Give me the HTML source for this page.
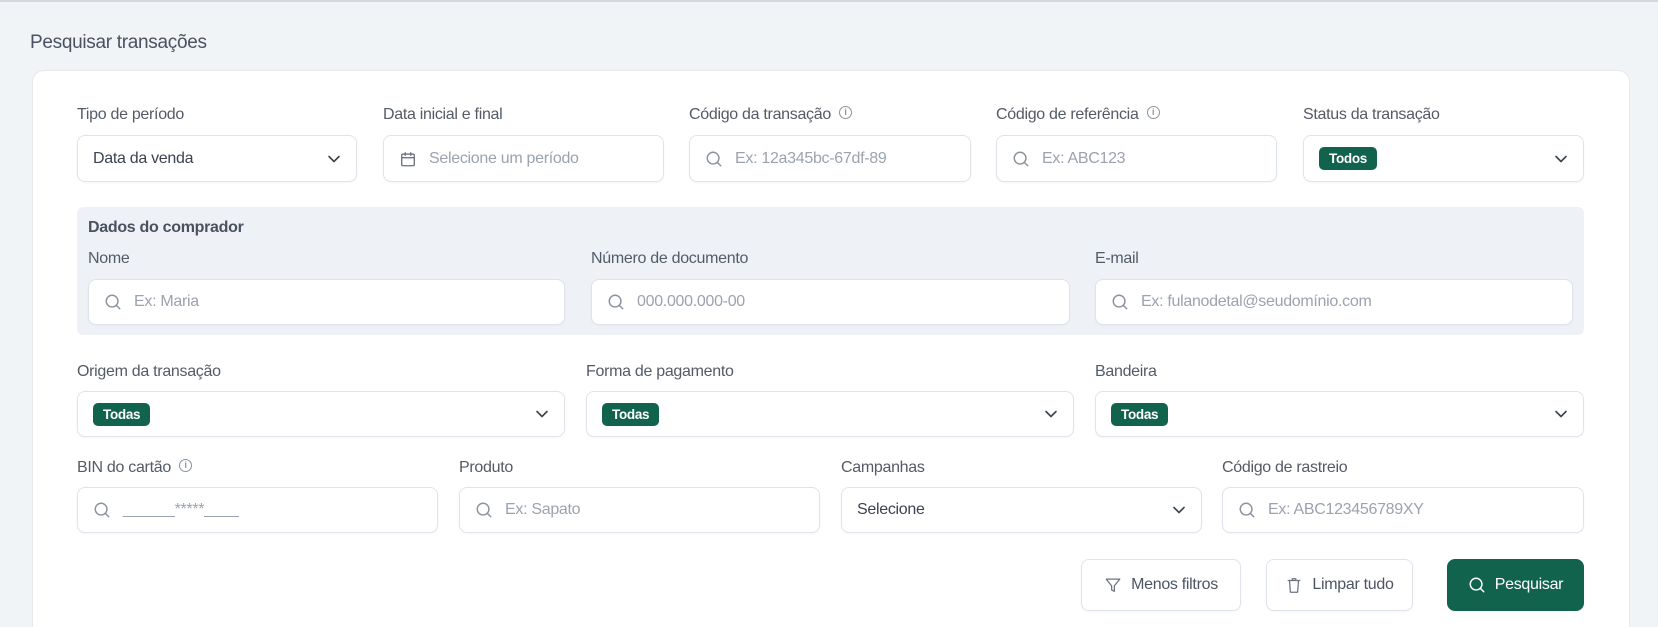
<!DOCTYPE html>
<html><head><meta charset="utf-8"><style>
*{box-sizing:border-box;margin:0;padding:0}
html{width:1658px;height:627px;overflow:hidden}
body{width:1658px;height:627px;background:#f1f4f7;font-family:"Liberation Sans",sans-serif;position:relative;overflow:hidden;color:#4b5563;border-top:2px solid #d3d8de}
.abs{position:absolute}
.title{left:30px;top:30px;font-size:19px;color:#4a5260;letter-spacing:-0.3px}
.card{left:32px;top:68px;width:1598px;height:580px;background:#fff;border:1px solid #e5e9ee;border-radius:12px}
.lbl{font-size:16px;color:#535b66;letter-spacing:-0.3px;white-space:nowrap}
.inp{background:#fff;border:1px solid #dfe4ea;border-radius:8px;box-shadow:0 1px 2px rgba(0,0,0,.04);display:flex;align-items:center;font-size:16px;letter-spacing:-0.3px}
.ph{color:#9aa3ae}
.val{color:#3b4350}
.ico{width:18px;height:18px;margin:0 12px 0 15px;flex:none}
.chev{position:absolute;right:14px;top:50%;margin-top:-8px}
.tag{background:#12634e;color:#fff;font-size:13.5px;font-weight:bold;border-radius:5px;padding:4px 10px;margin-left:15px;letter-spacing:-0.3px}
.panel{left:77px;top:205px;width:1507px;height:128px;background:#eef2f6;border-radius:6px}
.btn{display:flex;align-items:center;justify-content:center;border:1px solid #dfe4ea;border-radius:8px;background:#fff;font-size:16px;color:#4b5563;letter-spacing:-0.3px;box-shadow:0 1px 2px rgba(0,0,0,.04)}
.info{display:inline-block;width:13px;height:13px;border:1.3px solid #8a939e;border-radius:50%;vertical-align:middle;margin-left:8px;position:relative;top:-2px;font-size:9px;text-align:center;line-height:11px;color:#8a939e;font-weight:bold}
</style></head><body>
<svg width="0" height="0" style="position:absolute"><defs>
<symbol id="s" viewBox="0 0 20 20"><circle cx="9" cy="9" r="6.5" fill="none" stroke="#8a939e" stroke-width="1.6"/><path d="M14 14l3.5 3.5" stroke="#8a939e" stroke-width="1.6" stroke-linecap="round"/></symbol>
<symbol id="c" viewBox="0 0 16 16"><path d="M3 5.5l5 5 5-5" fill="none" stroke="#3b4350" stroke-width="1.6" stroke-linecap="round" stroke-linejoin="round"/></symbol>
</defs></svg>
<div class="abs title">Pesquisar transações</div>
<div class="abs card"></div>

<div class="abs lbl" style="left:77px;top:104px">Tipo de período</div>
<div class="abs inp" style="left:77px;top:133px;width:280px;height:47px"><span class="val" style="margin-left:15px">Data da venda</span><svg class="chev" width="16" height="16"><use href="#c"/></svg></div>
<div class="abs lbl" style="left:383px;top:104px">Data inicial e final</div>
<div class="abs inp" style="left:383px;top:133px;width:281px;height:47px"><svg class="ico" viewBox="0 0 20 20"><rect x="3" y="4.5" width="14" height="13" rx="1.5" fill="none" stroke="#6b7380" stroke-width="1.5"/><path d="M3 8.5h14M7 2.5v4M13 2.5v4" stroke="#6b7380" stroke-width="1.5"/></svg><span class="ph">Selecione um período</span></div>
<div class="abs lbl" style="left:689px;top:104px">Código da transação<span class="info">i</span></div>
<div class="abs inp" style="left:689px;top:133px;width:282px;height:47px"><svg class="ico"><use href="#s"/></svg><span class="ph">Ex: 12a345bc-67df-89</span></div>
<div class="abs lbl" style="left:996px;top:104px">Código de referência<span class="info">i</span></div>
<div class="abs inp" style="left:996px;top:133px;width:281px;height:47px"><svg class="ico"><use href="#s"/></svg><span class="ph">Ex: ABC123</span></div>
<div class="abs lbl" style="left:1303px;top:104px">Status da transação</div>
<div class="abs inp" style="left:1303px;top:133px;width:281px;height:47px"><span class="tag">Todos</span><svg class="chev" width="16" height="16"><use href="#c"/></svg></div>

<div class="abs panel"></div>
<div class="abs lbl" style="left:88px;top:217px;font-weight:bold;font-size:16px;color:#4a5260">Dados do comprador</div>
<div class="abs lbl" style="left:88px;top:248px">Nome</div>
<div class="abs inp" style="left:88px;top:277px;width:477px;height:46px"><svg class="ico"><use href="#s"/></svg><span class="ph">Ex: Maria</span></div>
<div class="abs lbl" style="left:591px;top:248px">Número de documento</div>
<div class="abs inp" style="left:591px;top:277px;width:479px;height:46px"><svg class="ico"><use href="#s"/></svg><span class="ph">000.000.000-00</span></div>
<div class="abs lbl" style="left:1095px;top:248px">E-mail</div>
<div class="abs inp" style="left:1095px;top:277px;width:478px;height:46px"><svg class="ico"><use href="#s"/></svg><span class="ph">Ex: fulanodetal@seudomínio.com</span></div>

<div class="abs lbl" style="left:77px;top:361px">Origem da transação</div>
<div class="abs inp" style="left:77px;top:389px;width:488px;height:46px"><span class="tag">Todas</span><svg class="chev" width="16" height="16"><use href="#c"/></svg></div>
<div class="abs lbl" style="left:586px;top:361px">Forma de pagamento</div>
<div class="abs inp" style="left:586px;top:389px;width:488px;height:46px"><span class="tag">Todas</span><svg class="chev" width="16" height="16"><use href="#c"/></svg></div>
<div class="abs lbl" style="left:1095px;top:361px">Bandeira</div>
<div class="abs inp" style="left:1095px;top:389px;width:489px;height:46px"><span class="tag">Todas</span><svg class="chev" width="16" height="16"><use href="#c"/></svg></div>

<div class="abs lbl" style="left:77px;top:457px">BIN do cartão<span class="info">i</span></div>
<div class="abs inp" style="left:77px;top:485px;width:361px;height:46px"><svg class="ico"><use href="#s"/></svg><span class="ph">______*****____</span></div>
<div class="abs lbl" style="left:459px;top:457px">Produto</div>
<div class="abs inp" style="left:459px;top:485px;width:361px;height:46px"><svg class="ico"><use href="#s"/></svg><span class="ph">Ex: Sapato</span></div>
<div class="abs lbl" style="left:841px;top:457px">Campanhas</div>
<div class="abs inp" style="left:841px;top:485px;width:361px;height:46px"><span class="val" style="margin-left:15px">Selecione</span><svg class="chev" width="16" height="16"><use href="#c"/></svg></div>
<div class="abs lbl" style="left:1222px;top:457px">Código de rastreio</div>
<div class="abs inp" style="left:1222px;top:485px;width:362px;height:46px"><svg class="ico"><use href="#s"/></svg><span class="ph">Ex: ABC123456789XY</span></div>

<div class="abs btn" style="left:1081px;top:557px;width:160px;height:52px"><svg width="18" height="18" viewBox="0 0 20 20" style="margin-right:9px"><path d="M2.5 3.5h15l-6 7.5v6l-3-1.5v-4.5z" fill="none" stroke="#6b7380" stroke-width="1.4" stroke-linejoin="round"/></svg>Menos filtros</div>
<div class="abs btn" style="left:1266px;top:557px;width:147px;height:52px"><svg width="18" height="18" viewBox="0 0 20 20" style="margin-right:9px"><path d="M3 5h14M8 5V3h4v2M5 5l1 13h8l1-13" fill="none" stroke="#6b7380" stroke-width="1.4" stroke-linejoin="round"/></svg>Limpar tudo</div>
<div class="abs btn" style="left:1447px;top:557px;width:137px;height:52px;background:#12634e;border-color:#12634e;color:#fff"><svg width="18" height="18" viewBox="0 0 20 20" style="margin-right:9px"><circle cx="9" cy="9" r="6.5" fill="none" stroke="#fff" stroke-width="1.6"/><path d="M14 14l3.5 3.5" stroke="#fff" stroke-width="1.6" stroke-linecap="round"/></svg>Pesquisar</div>
</body></html>
